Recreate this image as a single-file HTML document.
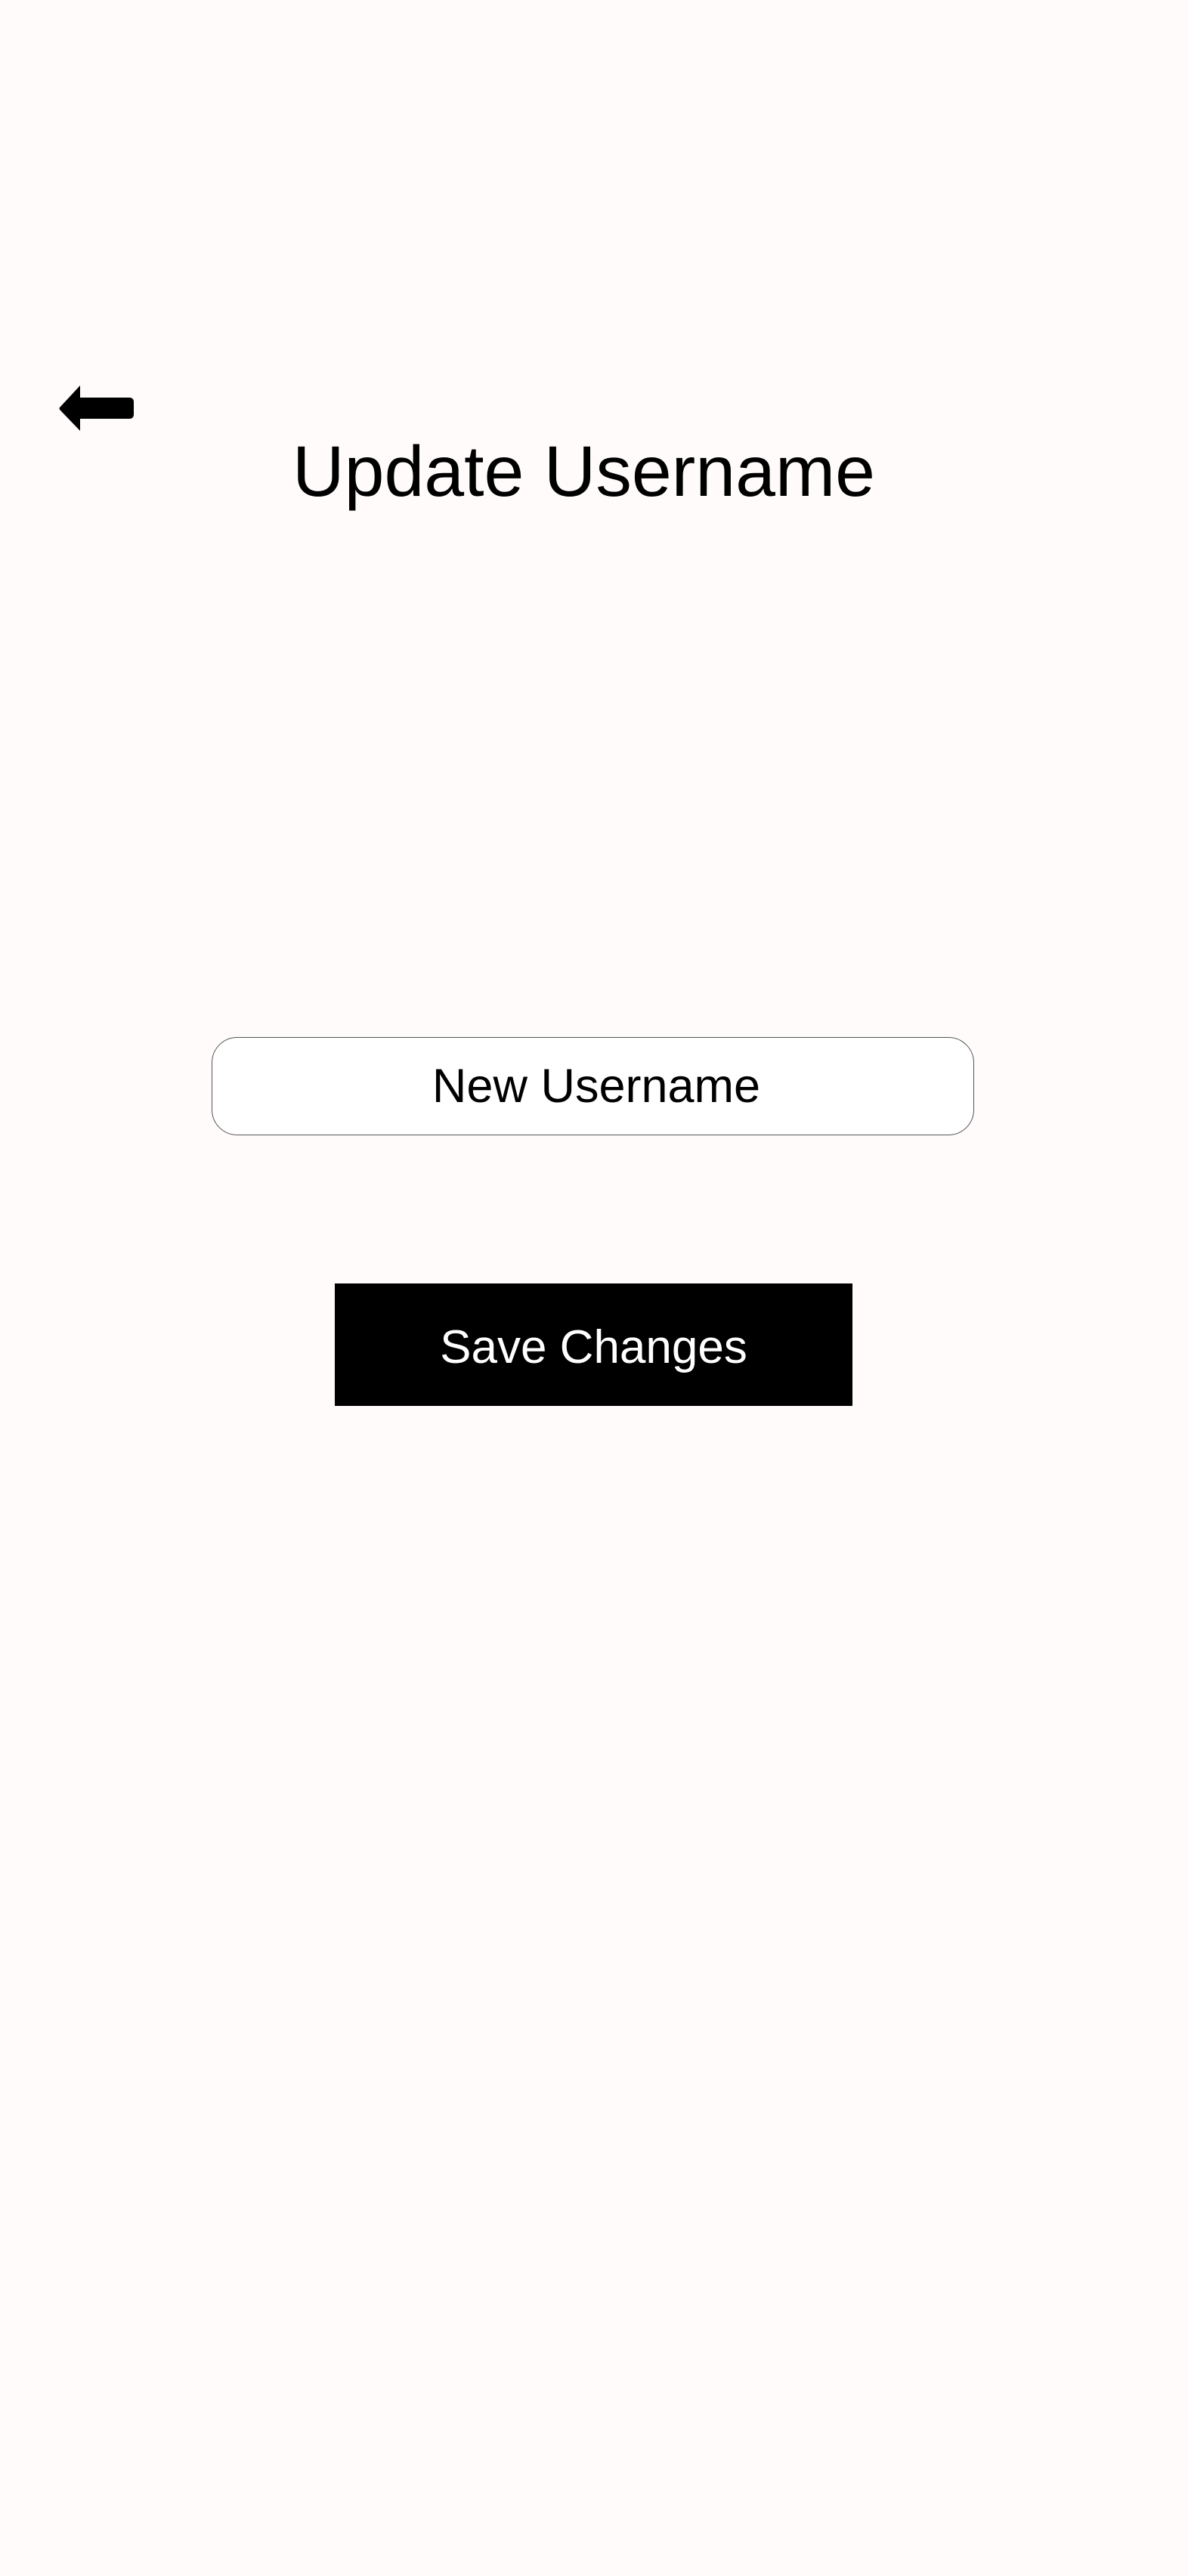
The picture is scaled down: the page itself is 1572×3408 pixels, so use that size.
<!DOCTYPE html>
<html><head><style>
html,body{margin:0;padding:0}
body{width:1572px;height:3408px;background:#fffbfa;position:relative;font-family:"Liberation Sans",sans-serif;overflow:hidden}
.t{position:absolute;white-space:nowrap;line-height:1}
</style></head><body>
<svg style="position:absolute;left:76px;top:507px" width="102" height="66" viewBox="0 0 102 66">
<path d="M30 3 L4 31 Q1 33 4 36 L30 63 L30 47 L95 47 Q101 47 101 41 L101 25 Q101 19 95 19 L30 19 Z" fill="#000"/>
</svg>
<div class="t" style="left:387px;top:577px;font-size:95px;color:#000">Update Username</div>
<div style="position:absolute;left:280px;top:1372px;width:1007px;height:128px;border:1.5px solid #555;border-radius:34px;background:#fff"></div>
<div class="t" style="left:284px;width:1010px;text-align:center;top:1406px;font-size:63px;color:#000">New Username</div>
<div style="position:absolute;left:443px;top:1698px;width:685px;height:162px;background:#000"></div>
<div class="t" style="left:443px;width:685px;text-align:center;top:1752px;font-size:62px;color:#fff">Save Changes</div>
</body></html>
